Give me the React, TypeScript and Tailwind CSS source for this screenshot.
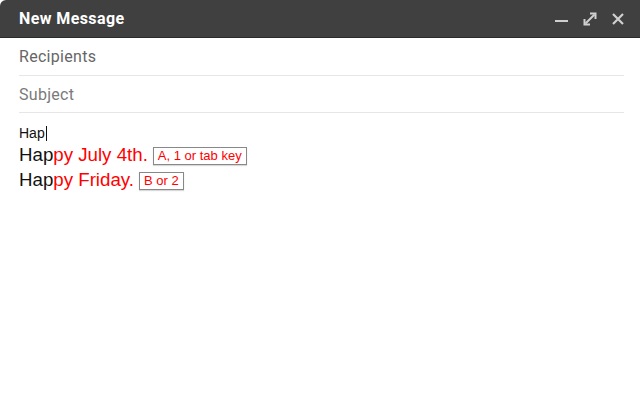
import type { ReactNode } from 'react';

function Badge({ children }: { children: ReactNode }) {
  return (
    <span className="ml-[5px] inline-flex h-[18px] items-center border border-[#888] px-[4px] text-[13px] leading-none text-[#f00] shadow-[0_1px_1px_rgba(0,0,0,0.15)]">
      {children}
    </span>
  );
}

function Suggestion({ rest, hint }: { rest: string; hint: string }) {
  return (
    <div className="flex h-[25px] items-center">
      <span className="text-[18.7px] leading-none text-[#111]">Hap</span>
      <span className="text-[18.7px] leading-none text-[#f00]">{rest}</span>
      <Badge>{hint}</Badge>
    </div>
  );
}

export default function App() {
  return (
    <div className="h-[400px] w-[640px] overflow-hidden bg-white font-['Roboto','Liberation_Sans',sans-serif]">
      {/* Title bar */}
      <div className="flex h-[38px] items-center justify-between rounded-tl-[6px] border-b border-[#2a2a2a] bg-[#404040] pl-[19px] pr-[16px]">
        <span className="text-[16px] font-bold tracking-[0.4px] text-white">New Message</span>
        <div className="flex items-center gap-[15px]">
          <svg width="13" height="13" viewBox="0 0 13 13">
            <rect x="0" y="8" width="13" height="2" fill="#cfcfcf" />
          </svg>
          <svg width="14" height="14" viewBox="0 0 14 14" fill="none" stroke="#cfcfcf" strokeWidth="2">
            <path d="M2.5 11.5 L11.5 2.5" />
            <path d="M1.5 7 V12.5 H7" />
            <path d="M7 1.5 H12.5 V7" />
          </svg>
          <svg width="12" height="12" viewBox="0 0 12 12" stroke="#cfcfcf" strokeWidth="2.2">
            <path d="M1 1 L11 11 M11 1 L1 11" />
          </svg>
        </div>
      </div>

      {/* Fields */}
      <div className="ml-[19px] mr-[16px]">
        <div className="flex h-[38px] items-center border-b border-[#e6e6e6] pt-[1px] text-[16px] tracking-[0.3px] text-[#666]">
          Recipients
        </div>
        <div className="flex h-[37px] items-center border-b border-[#e6e6e6] pt-[1px] text-[16px] tracking-[0.3px] text-[#7a7a7a]">
          Subject
        </div>

        {/* Body */}
        <div className="pt-[10px] font-['Liberation_Sans',Arial,sans-serif]">
          <div className="flex h-[20px] items-center text-[14px] leading-none text-[#111]">
            Hap<span className="ml-[1px] inline-block h-[15px] w-px bg-[#111]" />
          </div>
          <Suggestion rest="py July 4th." hint="A, 1 or tab key" />
          <Suggestion rest="py Friday." hint="B or 2" />
        </div>
      </div>
    </div>
  );
}
